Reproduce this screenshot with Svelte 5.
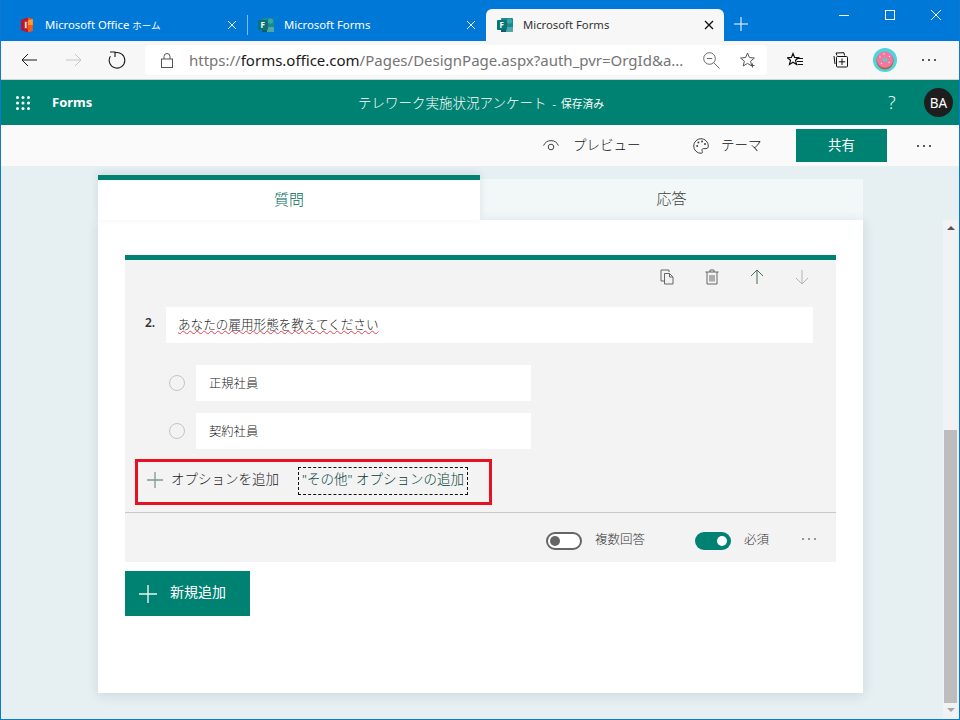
<script>
	const jp = '"Noto Sans", "Noto Sans CJK JP", sans-serif';
</script>

<div class="window" style:font-family={jp}>
	<header class="titlebar">
		<div class="tab first">
			<svg class="favicon office" viewBox="0 0 14 16" width="14" height="16">
				<path d="M8 0.5 L1 3 V13 L8 15.5 V12.5 L4 11.5 V4.5 L8 3.5 Z" fill="#c1122f" />
				<path d="M8 0.5 L12.8 2 V14 L8 15.5 Z" fill="#ee5a1c" />
				<path d="M8 3.5 L12.8 2 V8 H8 Z" fill="#ff9a2e" />
				<path d="M4 4.5 L8 3.5 V12.5 L4 11.5 Z" fill="#d83a2a" />
				<path d="M5 5 H6.6 V11 H5 Z" fill="#f6d9cf" />
			</svg>
			<span class="tab-title office-title">Microsoft Office <span class="kana">ホーム</span></span>
			<svg class="tab-close" viewBox="0 0 10 10" width="10" height="10"><path d="M1 1 L9 9 M9 1 L1 9" stroke="#fff" fill="none" /></svg>
		</div>
		<div class="tab-sep"></div>
		<div class="tab second">
			<svg class="favicon" viewBox="0 0 16 16" width="16" height="16">
				<rect x="4" y="1" width="12" height="14" rx="1" fill="#1b8a8f" />
				<circle cx="12.5" cy="4" r="2.6" fill="#37a6ac" />
				<rect x="9" y="10" width="7" height="5" fill="#4fa7aa" />
				<rect x="4" y="10" width="5" height="5" fill="#0b5f63" />
				<rect x="0" y="3" width="10" height="10" rx="1" fill="#0a7378" />
				<text x="2.6" y="11" class="fav-f">F</text>
			</svg>
			<span class="tab-title">Microsoft Forms</span>
			<svg class="tab-close" viewBox="0 0 10 10" width="10" height="10"><path d="M1 1 L9 9 M9 1 L1 9" stroke="#fff" fill="none" /></svg>
		</div>
		<div class="tab active">
			<svg class="favicon" viewBox="0 0 16 16" width="16" height="16">
				<rect x="4" y="1" width="12" height="14" rx="1" fill="#1b8a8f" />
				<circle cx="12.5" cy="4" r="2.6" fill="#37a6ac" />
				<rect x="9" y="10" width="7" height="5" fill="#4fa7aa" />
				<rect x="4" y="10" width="5" height="5" fill="#0b5f63" />
				<rect x="0" y="3" width="10" height="10" rx="1" fill="#0a7378" />
				<text x="2.6" y="11" class="fav-f">F</text>
			</svg>
			<span class="tab-title">Microsoft Forms</span>
			<svg class="tab-close" viewBox="0 0 10 10" width="10" height="10"><path d="M1 1 L9 9 M9 1 L1 9" stroke="#111" stroke-width="1.3" fill="none" /></svg>
		</div>
		<svg class="new-tab" viewBox="0 0 14 14" width="14" height="14"><path d="M7 0 V14 M0 7 H14" stroke="#fff" fill="none" /></svg>
		<div class="win-controls">
			<svg viewBox="0 0 10 10" width="10" height="10"><path d="M0 5.5 H10" stroke="#fff" fill="none" /></svg>
			<svg viewBox="0 0 10 10" width="10" height="10"><rect x="0.5" y="0.5" width="9" height="9" stroke="#fff" fill="none" /></svg>
			<svg viewBox="0 0 10 10" width="10" height="10"><path d="M0 0 L10 10 M10 0 L0 10" stroke="#fff" fill="none" /></svg>
		</div>
	</header>

	<nav class="toolbar">
		<svg class="nav-back" viewBox="0 0 16 14" width="16" height="14"><path d="M16 7 H1 M7 1 L1 7 L7 13" stroke="#1a1a1a" fill="none" /></svg>
		<svg class="nav-fwd" viewBox="0 0 16 14" width="16" height="14"><path d="M0 7 H15 M9 1 L15 7 L9 13" stroke="#c4c4c4" fill="none" /></svg>
		<svg class="nav-reload" viewBox="0 0 18 18" width="18" height="18"><path d="M7 1.8 A7.8 7.8 0 1 1 2.4 5.2 M2 1 H7 V6" stroke="#1a1a1a" stroke-width="1.1" fill="none" /></svg>
		<div class="address">
			<svg class="lock" viewBox="0 0 12 16" width="12" height="16"><path d="M3 7 V4.5 a3 3 0 0 1 6 0 V7" stroke="#555" fill="none" /><rect x="0.5" y="7" width="11" height="8.5" stroke="#555" fill="none" /></svg>
			<span class="url"><span class="url-faint">https://</span><span class="url-host">forms.office.com</span><span class="url-faint">/Pages/DesignPage.aspx?auth_pvr=OrgId&amp;a...</span></span>
			<svg class="addr-zoom" viewBox="0 0 17 17" width="17" height="17"><circle cx="6.5" cy="6.5" r="5.8" stroke="#666" fill="none" /><path d="M3.8 6.5 H9.2 M10.8 10.8 L16.5 16.5" stroke="#666" fill="none" /></svg>
			<svg class="addr-star" viewBox="0 0 16 16" width="16" height="16"><path d="M7.5 1 L9.4 5.6 L14.4 6 L10.6 9.2 L11.8 14 L7.5 11.4 L3.2 14 L4.4 9.2 L0.6 6 L5.6 5.6 Z" stroke="#555" fill="none" /><path d="M12.5 11.5 V15.5 M10.5 13.5 H14.5" stroke="#555" fill="none" /></svg>
		</div>
		<svg class="fav-icon" viewBox="0 0 16 16" width="16" height="16"><path d="M6 1.5 L7.6 5.4 L11.6 5.7 L8.5 8.3 L9.5 12.4 L6 10.2 L2.5 12.4 L3.5 8.3 L0.4 5.7 L4.4 5.4 Z" stroke="#111" stroke-width="1.2" fill="none" /><path d="M9.5 6.5 H16 M10 9.5 H16 M10.5 12.5 H16" stroke="#111" fill="none" /></svg>
		<svg class="coll-icon" viewBox="0 0 16 16" width="16" height="16"><path d="M4 3.5 L3 1 L11 0.7 L11.5 3.5 M1 4 L2 12" stroke="#111" fill="none" /><rect x="3.5" y="4.5" width="11" height="10.5" rx="1" stroke="#111" fill="none" /><path d="M9 6.5 V13 M5.8 9.8 H12.2" stroke="#111" fill="none" /></svg>
		<svg class="profile" viewBox="0 0 24 24" width="24" height="24">
			<circle cx="12" cy="12" r="12" fill="#4fd3dc" />
			<circle cx="12" cy="12.8" r="8.6" fill="#a5673f" />
			<circle cx="12" cy="11.6" r="8.2" fill="#f0789f" />
			<circle cx="12" cy="11.8" r="2.2" fill="#5fc8cf" />
			<circle cx="7" cy="9" r="0.7" fill="#fde3ec" />
			<circle cx="11" cy="6" r="0.7" fill="#fde3ec" />
			<circle cx="16.5" cy="8.5" r="0.7" fill="#fde3ec" />
			<circle cx="16" cy="14.5" r="0.7" fill="#fde3ec" />
			<circle cx="8.5" cy="15.5" r="0.7" fill="#fde3ec" />
		</svg>
		<div class="dots tool-dots"><i></i><i></i><i></i></div>
	</nav>

	<div class="appbar">
		<svg class="waffle" viewBox="0 0 14 14" width="14" height="14" fill="#fff">
			{#each [1.5, 7, 12.5] as cy}
				{#each [1.5, 7, 12.5] as cx}
					<circle {cx} {cy} r="1.5" />
				{/each}
			{/each}
		</svg>
		<span class="brand">Forms</span>
		<span class="doc-title">テレワーク実施状況アンケート<span class="saved"><span class="saved-dash">-</span>保存済み</span></span>
		<span class="help">?</span>
		<span class="avatar">BA</span>
	</div>

	<div class="cmdbar">
		<svg class="eye" viewBox="0 0 16 12" width="16" height="12"><path d="M0.6 5.6 A8 8 0 0 1 15.4 5.6" stroke="#444" fill="none" /><circle cx="8" cy="7" r="2.8" stroke="#444" fill="none" /></svg>
		<span class="cmd-label preview">プレビュー</span>
		<svg class="palette" viewBox="0 0 16 16" width="16" height="16"><path d="M8 0.7 A7.3 7.3 0 1 0 8 15.3 C10 15.3 9.5 13.5 9 12.6 C8.5 11.4 9.5 10.6 10.8 10.6 H13 C14.5 10.6 15.3 9.6 15.3 8 A7.3 7.3 0 0 0 8 0.7 Z" stroke="#444" fill="none" /><circle cx="4.2" cy="8" r="1" fill="#444" /><circle cx="5.4" cy="4.6" r="1" fill="#444" /><circle cx="9" cy="3.6" r="1" fill="#444" /><circle cx="12" cy="6" r="1" fill="#444" /></svg>
		<span class="cmd-label theme">テーマ</span>
		<button class="share"><span>共有</span></button>
		<div class="dots cmd-dots"><i></i><i></i><i></i></div>
	</div>

	<main class="page">
		<div class="form-shell">
			<div class="tabs">
				<div class="form-tab current"><span>質問</span></div>
				<div class="form-tab"><span>応答</span></div>
			</div>
			<section class="card">
				<div class="question">
					<div class="q-tools">
						<svg viewBox="0 0 14 16" width="14" height="16"><path d="M9 3 V1 H1 V12 H4" stroke="#666" fill="none" /><path d="M4.5 4.5 H9.5 L13 8 V15 H4.5 Z M9.5 4.5 V8 H13" stroke="#666" fill="none" /></svg>
						<svg viewBox="0 0 14 16" width="14" height="16"><path d="M0.5 3 H13.5 M5 3 V1 H9 V3 M2 3 V15 H12 V3 M5 6 V12.5 M7 6 V12.5 M9 6 V12.5" stroke="#666" fill="none" /></svg>
						<svg viewBox="0 0 14 16" width="14" height="16"><path d="M7 15 V1 M1 7 L7 1 L13 7" stroke="#3f6f52" fill="none" /></svg>
						<svg viewBox="0 0 14 16" width="14" height="16"><path d="M7 1 V15 M1 9 L7 15 L13 9" stroke="#b4b4b4" fill="none" /></svg>
					</div>
					<div class="q-row">
						<span class="q-num">2.</span>
						<div class="q-input"><span class="squiggle">あなたの雇用形態を教えてください</span></div>
					</div>
					<div class="opt-row">
						<span class="radio"></span>
						<div class="opt-input">正規社員</div>
					</div>
					<div class="opt-row">
						<span class="radio"></span>
						<div class="opt-input">契約社員</div>
					</div>
					<div class="add-row">
						<svg class="add-plus" viewBox="0 0 16 16" width="16" height="16"><path d="M8 0 V16 M0 8 H16" stroke="#7d9a90" stroke-width="1.3" fill="none" /></svg>
						<span class="add-option">オプションを追加</span>
						<span class="add-other">"その他" オプションの追加</span>
					</div>
					<div class="q-footer">
						<span class="toggle off"><i></i></span>
						<span class="foot-label multi">複数回答</span>
						<span class="toggle on"><i></i></span>
						<span class="foot-label req">必須</span>
						<div class="dots foot-dots"><i></i><i></i><i></i></div>
					</div>
				</div>
				<button class="add-new">
					<svg viewBox="0 0 18 18" width="18" height="18"><path d="M9 0 V18 M0 9 H18" stroke="#e8f3ef" stroke-width="1.4" fill="none" /></svg>
					<span>新規追加</span>
				</button>
			</section>
		</div>
		<div class="scrollbar">
			<span class="arrow up"></span>
			<span class="thumb"></span>
			<span class="arrow down"></span>
		</div>
	</main>
</div>

<style>
	:global(body) {
		margin: 0;
	}

	.window {
		width: 960px;
		height: 720px;
		box-sizing: border-box;
		border: 1px solid #0f78d0;
		border-top: 0;
		display: flex;
		flex-direction: column;
		overflow: hidden;
		color: #222;
	}

	.titlebar {
		height: 41px;
		flex: none;
		background: #0078d7;
		display: flex;
		align-items: flex-end;
		color: #fff;
		font-size: 11.3px;
	}

	.tab {
		height: 32px;
		box-sizing: border-box;
		display: flex;
		align-items: center;
		flex: none;
	}

	.tab.first {
		width: 246px;
		padding-left: 19px;
	}

	.tab.second {
		width: 238px;
		padding-left: 10px;
	}

	.tab.active {
		width: 238px;
		padding-left: 11px;
		background: #f7f7f7;
		color: #333;
		border-radius: 6px 6px 0 0;
	}

	.tab-sep {
		width: 1px;
		height: 20px;
		margin-bottom: 6px;
		background: #7fbbeb;
		flex: none;
	}

	.favicon {
		flex: none;
	}

	.fav-f {
		font: bold 8px "Noto Sans", sans-serif;
		fill: #fff;
	}

	.tab-title {
		margin-left: 10px;
		padding-bottom: 2px;
		flex: 1;
		white-space: nowrap;
	}

	.office-title {
		margin-left: 11px;
	}

	.kana {
		font-size: 9.5px;
	}

	.tab-close {
		margin-right: 10px;
		flex: none;
	}

	.new-tab {
		margin: 0 0 10px 10px;
		flex: none;
	}

	.win-controls {
		margin-left: auto;
		align-self: flex-start;
		margin-top: 10px;
		margin-right: 18px;
		display: flex;
		gap: 36px;
		width: 102px;
	}

	.toolbar {
		height: 39px;
		flex: none;
		box-sizing: border-box;
		background: #f7f7f7;
		border-bottom: 1px solid #d2d2d2;
		display: flex;
		align-items: center;
	}

	.nav-back {
		margin-left: 20px;
	}

	.nav-fwd {
		margin-left: 29px;
	}

	.nav-reload {
		margin-left: 26px;
	}

	.address {
		width: 622px;
		height: 30px;
		margin-left: 19px;
		background: #fff;
		border-radius: 4px;
		display: flex;
		align-items: center;
		flex: none;
	}

	.lock {
		margin-left: 16px;
		flex: none;
	}

	.url {
		margin-left: 16px;
		font-size: 15px;
		white-space: nowrap;
		width: 494px;
		flex: none;
	}

	.url-faint {
		color: #757575;
	}

	.url-host {
		color: #1a1a1a;
	}

	.addr-zoom {
		margin-left: 20px;
		flex: none;
	}

	.addr-star {
		margin-left: 20px;
		flex: none;
	}

	.fav-icon {
		margin-left: 20px;
	}

	.coll-icon {
		margin-left: 30px;
	}

	.profile {
		margin-left: 24px;
	}

	.dots {
		display: flex;
		gap: 4px;
	}

	.dots i {
		width: 2px;
		height: 2px;
		border-radius: 50%;
		background: #222;
	}

	.tool-dots {
		margin-left: 25px;
	}

	.appbar {
		height: 45px;
		flex: none;
		background: #008272;
		color: #fff;
		display: flex;
		align-items: center;
	}

	.waffle {
		margin-left: 15px;
		flex: none;
	}

	.brand {
		margin-left: 22px;
		width: 306px;
		padding-bottom: 2px;
		font-size: 13px;
		font-weight: 700;
		flex: none;
	}

	.doc-title {
		font-size: 13.5px;
		font-weight: 300;
		padding-bottom: 2px;
		white-space: nowrap;
		width: 530px;
		flex: none;
	}

	.saved {
		font-size: 10.8px;
		font-weight: 400;
		margin-left: 6px;
	}

	.saved-dash {
		margin-right: 5px;
	}

	.help {
		width: 12px;
		padding-bottom: 2px;
		font-size: 18px;
		font-weight: 300;
		color: #eef7f5;
		flex: none;
	}

	.avatar {
		width: 29px;
		height: 29px;
		margin-left: 24px;
		border-radius: 50%;
		background: #1e1e1e;
		font-size: 13.5px;
		display: flex;
		align-items: center;
		justify-content: center;
		flex: none;
	}

	.cmdbar {
		height: 41px;
		flex: none;
		box-sizing: border-box;
		background: #fafafa;
		display: flex;
		align-items: center;
	}

	.eye {
		margin-left: 542px;
		flex: none;
	}

	.cmd-label {
		font-size: 13.5px;
		font-weight: 300;
		padding-bottom: 4px;
		color: #111;
		white-space: nowrap;
		flex: none;
	}

	.preview {
		margin-left: 14px;
		width: 67px;
	}

	.palette {
		margin-left: 53px;
		flex: none;
	}

	.theme {
		margin-left: 12px;
		width: 41px;
	}

	.share {
		width: 91px;
		height: 33px;
		margin-left: 34px;
		border: 0;
		padding: 0 0 4px;
		background: #008272;
		color: #fff;
		font: inherit;
		font-size: 13.4px;
		flex: none;
	}

	.cmd-dots {
		margin-left: 30px;
	}

	.page {
		flex: 1;
		min-height: 0;
		position: relative;
		background: #e6eff2;
		padding: 9px 0 0 97px;
	}

	.form-shell {
		width: 765px;
	}

	.tabs {
		height: 45px;
		display: flex;
		align-items: flex-end;
	}

	.form-tab {
		width: 383px;
		height: 41px;
		box-sizing: border-box;
		padding-bottom: 4px;
		background: #f2f7f8;
		color: #444;
		font-size: 15px;
		font-weight: 300;
		display: flex;
		align-items: center;
		justify-content: center;
		flex: none;
	}

	.form-tab.current {
		width: 382px;
		height: 45px;
		background: #fff;
		color: #00695c;
		border-top: 5px solid #008272;
		box-shadow: 0 -2px 8px rgba(0, 60, 80, 0.1);
		position: relative;
		z-index: 1;
	}

	.card {
		height: 473px;
		box-sizing: border-box;
		padding: 35px 27px 0;
		background: #fff;
		box-shadow: 0 2px 12px rgba(0, 60, 80, 0.12);
		position: relative;
	}

	.question {
		height: 307px;
		box-sizing: border-box;
		background: #f3f3f3;
		border-top: 5px solid #008272;
	}

	.q-tools {
		height: 47px;
		box-sizing: border-box;
		padding: 9px 27px 0 0;
		display: flex;
		justify-content: flex-end;
		align-items: flex-start;
		gap: 31px;
	}

	.q-row {
		display: flex;
		padding-left: 20px;
		margin-bottom: 22px;
	}

	.q-num {
		width: 21px;
		margin-top: 7px;
		font-size: 12px;
		font-weight: 600;
		color: #333;
		flex: none;
	}

	.q-input {
		width: 647px;
		height: 36px;
		box-sizing: border-box;
		padding: 0 0 4px 12px;
		background: #fff;
		font-size: 12.6px;
		font-weight: 300;
		display: flex;
		align-items: center;
	}

	.squiggle {
		text-decoration: underline wavy #e8414d 1px;
		text-underline-offset: 1px;
	}

	.opt-row {
		display: flex;
		align-items: center;
		padding-left: 44px;
		margin-bottom: 12px;
	}

	.radio {
		width: 16px;
		height: 16px;
		box-sizing: border-box;
		border: 1px solid #c4c4c4;
		border-radius: 50%;
		flex: none;
	}

	.opt-input {
		width: 335px;
		height: 36px;
		box-sizing: border-box;
		margin-left: 11px;
		padding-left: 13px;
		background: #fff;
		font-size: 12.3px;
		font-weight: 300;
		display: flex;
		align-items: center;
	}

	.add-row {
		width: 357px;
		height: 46px;
		box-sizing: border-box;
		margin: -2px 0 7px 10px;
		border: 3px solid #e81123;
		display: flex;
		align-items: center;
		font-size: 13.5px;
		font-weight: 300;
		white-space: nowrap;
	}

	.add-plus {
		margin-left: 9px;
		margin-bottom: 4px;
		flex: none;
	}

	.add-option {
		margin-left: 8px;
		padding-bottom: 8px;
		width: 108px;
		flex: none;
	}

	.add-other {
		margin-left: 19px;
		margin-bottom: 3px;
		width: 170px;
		height: 28px;
		box-sizing: border-box;
		padding-bottom: 5px;
		border: 1px dashed #111;
		color: #003e38;
		display: flex;
		align-items: center;
		justify-content: center;
		flex: none;
	}

	.q-footer {
		height: 50px;
		box-sizing: border-box;
		border-top: 1px solid #c8c8c8;
		display: flex;
		align-items: center;
		padding-left: 421px;
		font-size: 12.5px;
		font-weight: 300;
	}

	.toggle {
		width: 36px;
		height: 18px;
		box-sizing: border-box;
		margin-top: 6px;
		border-radius: 9px;
		display: flex;
		align-items: center;
		flex: none;
	}

	.toggle i {
		width: 10px;
		height: 10px;
		border-radius: 50%;
	}

	.toggle.off {
		border: 2px solid #666;
		background: #fff;
		padding-left: 2px;
	}

	.toggle.off i {
		background: #666;
	}

	.toggle.on {
		background: #008272;
		justify-content: flex-end;
		padding-right: 4px;
	}

	.toggle.on i {
		background: #fff;
	}

	.foot-label {
		margin-left: 13px;
		margin-top: 2px;
		color: #333;
		white-space: nowrap;
		flex: none;
	}

	.multi {
		width: 50px;
		margin-right: 50px;
	}

	.req {
		width: 25px;
	}

	.foot-dots {
		margin-left: 33px;
		margin-top: 2px;
	}

	.foot-dots i {
		background: #777;
	}

	.add-new {
		width: 125px;
		height: 45px;
		margin-top: 9px;
		padding: 0 0 0 14px;
		border: 0;
		background: #008272;
		color: #fff;
		font: inherit;
		font-size: 14px;
		display: flex;
		align-items: center;
		gap: 13px;
	}

	.add-new span {
		padding-bottom: 6px;
	}

	.scrollbar {
		position: absolute;
		top: 54px;
		right: 1px;
		bottom: 0;
		width: 15px;
		background: #f0f2f3;
		display: flex;
		flex-direction: column;
		align-items: center;
	}

	.arrow {
		width: 0;
		height: 0;
		border-left: 4px solid transparent;
		border-right: 4px solid transparent;
		flex: none;
	}

	.arrow.up {
		margin-top: 6px;
		border-bottom: 4px solid #555;
	}

	.arrow.down {
		margin-top: 5px;
		border-top: 4px solid #a5a5a5;
	}

	.thumb {
		width: 13px;
		height: 273px;
		margin-top: 200px;
		background: #bdbdbd;
		flex: none;
	}
</style>
